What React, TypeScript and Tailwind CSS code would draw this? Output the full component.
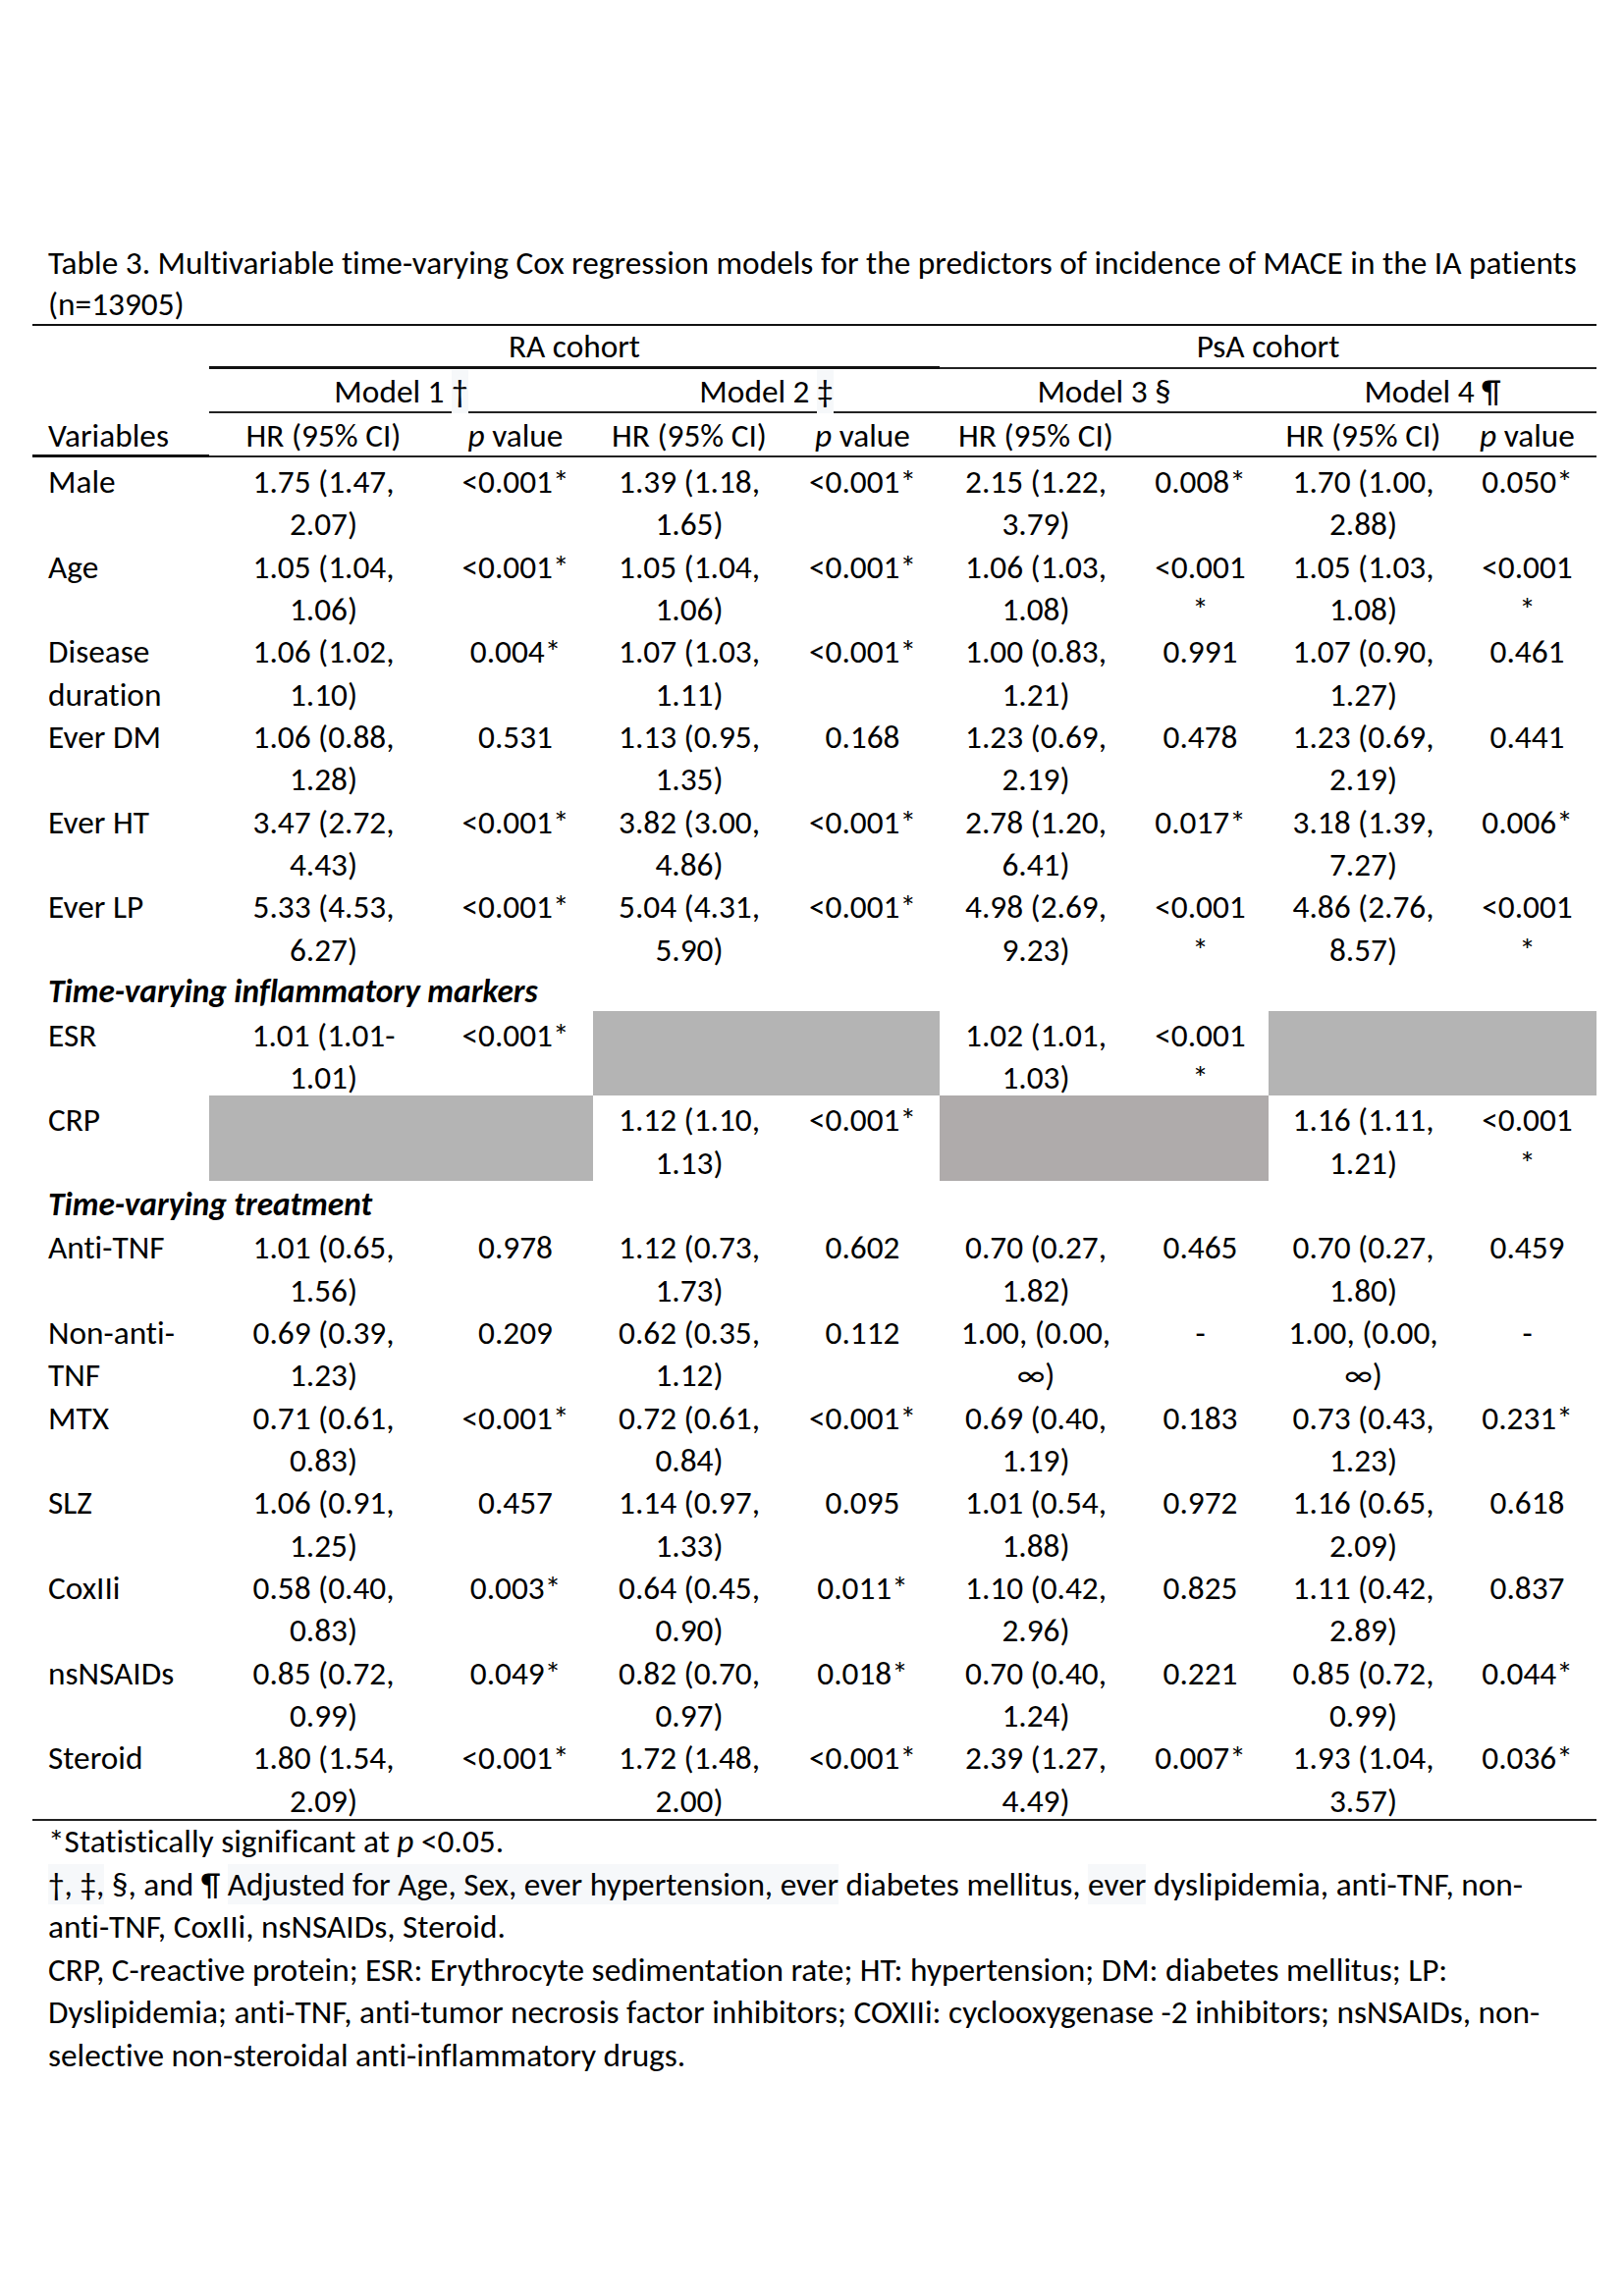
import React from 'react'

const GRID = 'grid grid-cols-[180px_233px_158px_196px_157px_196px_139px_193px_141px]'

// a value cell is written as 'line one|line two'; 'GRAY' is an empty shaded cell
type Cell = string

const MARKERS: { name: string; cells: Cell[] }[] = [
  { name: 'ESR', cells: ['1.01 (1.01-|1.01)', '<0.001*', 'GRAY', 'GRAY', '1.02 (1.01,|1.03)', '<0.001|*', 'GRAY', 'GRAY'] },
  { name: 'CRP', cells: ['GRAY', 'GRAY', '1.12 (1.10,|1.13)', '<0.001*', 'GRAY2', 'GRAY2', '1.16 (1.11,|1.21)', '<0.001|*'] },
]

const BASELINE: { name: string; cells: Cell[] }[] = [
  { name: 'Male', cells: ['1.75 (1.47,|2.07)', '<0.001*', '1.39 (1.18,|1.65)', '<0.001*', '2.15 (1.22,|3.79)', '0.008*', '1.70 (1.00,|2.88)', '0.050*'] },
  { name: 'Age', cells: ['1.05 (1.04,|1.06)', '<0.001*', '1.05 (1.04,|1.06)', '<0.001*', '1.06 (1.03,|1.08)', '<0.001|*', '1.05 (1.03,|1.08)', '<0.001|*'] },
  { name: 'Disease|duration', cells: ['1.06 (1.02,|1.10)', '0.004*', '1.07 (1.03,|1.11)', '<0.001*', '1.00 (0.83,|1.21)', '0.991', '1.07 (0.90,|1.27)', '0.461'] },
  { name: 'Ever DM', cells: ['1.06 (0.88,|1.28)', '0.531', '1.13 (0.95,|1.35)', '0.168', '1.23 (0.69,|2.19)', '0.478', '1.23 (0.69,|2.19)', '0.441'] },
  { name: 'Ever HT', cells: ['3.47 (2.72,|4.43)', '<0.001*', '3.82 (3.00,|4.86)', '<0.001*', '2.78 (1.20,|6.41)', '0.017*', '3.18 (1.39,|7.27)', '0.006*'] },
  { name: 'Ever LP', cells: ['5.33 (4.53,|6.27)', '<0.001*', '5.04 (4.31,|5.90)', '<0.001*', '4.98 (2.69,|9.23)', '<0.001|*', '4.86 (2.76,|8.57)', '<0.001|*'] },
]

const TREATMENT: { name: string; cells: Cell[] }[] = [
  { name: 'Anti-TNF', cells: ['1.01 (0.65,|1.56)', '0.978', '1.12 (0.73,|1.73)', '0.602', '0.70 (0.27,|1.82)', '0.465', '0.70 (0.27,|1.80)', '0.459'] },
  { name: 'Non-anti-|TNF', cells: ['0.69 (0.39,|1.23)', '0.209', '0.62 (0.35,|1.12)', '0.112', '1.00, (0.00,|∞)', '-', '1.00, (0.00,|∞)', '-'] },
  { name: 'MTX', cells: ['0.71 (0.61,|0.83)', '<0.001*', '0.72 (0.61,|0.84)', '<0.001*', '0.69 (0.40,|1.19)', '0.183', '0.73 (0.43,|1.23)', '0.231*'] },
  { name: 'SLZ', cells: ['1.06 (0.91,|1.25)', '0.457', '1.14 (0.97,|1.33)', '0.095', '1.01 (0.54,|1.88)', '0.972', '1.16 (0.65,|2.09)', '0.618'] },
  { name: 'CoxIIi', cells: ['0.58 (0.40,|0.83)', '0.003*', '0.64 (0.45,|0.90)', '0.011*', '1.10 (0.42,|2.96)', '0.825', '1.11 (0.42,|2.89)', '0.837'] },
  { name: 'nsNSAIDs', cells: ['0.85 (0.72,|0.99)', '0.049*', '0.82 (0.70,|0.97)', '0.018*', '0.70 (0.40,|1.24)', '0.221', '0.85 (0.72,|0.99)', '0.044*'] },
  { name: 'Steroid', cells: ['1.80 (1.54,|2.09)', '<0.001*', '1.72 (1.48,|2.00)', '<0.001*', '2.39 (1.27,|4.49)', '0.007*', '1.93 (1.04,|3.57)', '0.036*'] },
]

function Lines({ text }: { text: string }) {
  return (
    <>
      {text.split('|').map((l, i) => (
        <div key={i}>{l}</div>
      ))}
    </>
  )
}

function DataRow({ name, cells }: { name: string; cells: Cell[] }) {
  return (
    <>
      <div className="pl-4 pt-[3px] h-[86.7px]">
        <Lines text={name} />
      </div>
      {cells.map((c, i) => {
        if (c === 'GRAY') return <div key={i} className="h-[86.7px] bg-[#b4b4b4]" />
        if (c === 'GRAY2') return <div key={i} className="h-[86.7px] bg-[#afabab]" />
        return (
          <div key={i} className="h-[86.7px] text-center pt-[3px]">
            <Lines text={c} />
          </div>
        )
      })}
    </>
  )
}

function Section({ title }: { title: string }) {
  return <div className="col-span-9 pl-4 pt-[2px] font-bold italic h-[43.4px]">{title}</div>
}

export default function App() {
  return (
    <div
      className="min-h-[2339px] w-full bg-white text-black text-[33.3px] [font-variant-ligatures:none]"
      style={{ fontFamily: '"Carlito", "Liberation Sans", sans-serif' }}
    >
      {/* Caption */}
      <div className="pl-[49px] pt-[247px] leading-[41.5px]">
        <div>Table 3. Multivariable time-varying Cox regression models for the predictors of incidence of MACE in the IA patients</div>
        <div>(n=13905)</div>
      </div>

      {/* Table */}
      <div className={`${GRID} ml-[33px] w-[1593px] border-t-2 border-[#111] leading-[43.4px]`}>
        {/* cohort row */}
        <div className="h-[44px]" />
        <div className="col-span-4 h-[44px] border-b-[3px] border-[#111] flex items-center justify-center">RA cohort</div>
        <div className="col-span-4 h-[44px] border-b-2 border-[#222] flex items-center justify-center">PsA cohort</div>

        {/* model row */}
        <div className="h-[45px]" />
        <div className="col-span-2 h-[45px] pt-[3px] border-b-2 border-[#222] flex items-center justify-center">
          Model 1&nbsp;<span className="bg-[#f6f8fa]">†</span>
        </div>
        <div className="col-span-2 h-[45px] pt-[3px] border-b-2 border-[#222] flex items-center justify-center">
          Model 2&nbsp;<span className="bg-[#f6f8fa]">‡</span>
        </div>
        <div className="col-span-2 h-[45px] pt-[3px] border-b-2 border-[#222] flex items-center justify-center">Model 3 §</div>
        <div className="col-span-2 h-[45px] pt-[3px] border-b-2 border-[#222] flex items-center justify-center">Model 4 ¶</div>

        {/* column labels */}
        <div className="h-[45px] pl-4 pt-[3px] border-b-[3px] border-[#111] flex items-center">Variables</div>
        {['HR (95% CI)', 'p', 'HR (95% CI)', 'p', 'HR (95% CI)', '', 'HR (95% CI)', 'p'].map((h, i) => (
          <div key={i} className="h-[45px] pt-[3px] border-b-2 border-[#222] flex items-center justify-center">
            {h === 'p' ? (
              <span>
                <i>p</i> value
              </span>
            ) : (
              h
            )}
          </div>
        ))}

        {BASELINE.map((r) => (
          <DataRow key={r.name} {...r} />
        ))}

        <Section title="Time-varying inflammatory markers" />
        {MARKERS.map((r) => (
          <DataRow key={r.name} {...r} />
        ))}

        <Section title="Time-varying treatment" />
        {TREATMENT.map((r) => (
          <DataRow key={r.name} {...r} />
        ))}

        <div className="col-span-9 border-b-2 border-[#222]" />
      </div>

      {/* Footnotes */}
      <div className="pl-[49px] -mt-[1px] leading-[43.5px]">
        <div>
          *Statistically significant at <i>p</i> &lt;0.05.
        </div>
        <div>
          <span className="bg-[#f6f8fa]">†, ‡,</span> §, and ¶{' '}
          <span className="bg-[#f6f8fa]">Adjusted for Age, Sex, ever hypertension, ever</span> diabetes mellitus,{' '}
          <span className="bg-[#f6f8fa]">ever</span> dyslipidemia, anti-TNF, non-
        </div>
        <div>anti-TNF, CoxIIi, nsNSAIDs, Steroid.</div>
        <div>CRP, C-reactive protein; ESR: Erythrocyte sedimentation rate; HT: hypertension; DM: diabetes mellitus; LP:</div>
        <div>Dyslipidemia; anti-TNF, anti-tumor necrosis factor inhibitors; COXIIi: cyclooxygenase -2 inhibitors; nsNSAIDs, non-</div>
        <div>selective non-steroidal anti-inflammatory drugs.</div>
      </div>
    </div>
  )
}
